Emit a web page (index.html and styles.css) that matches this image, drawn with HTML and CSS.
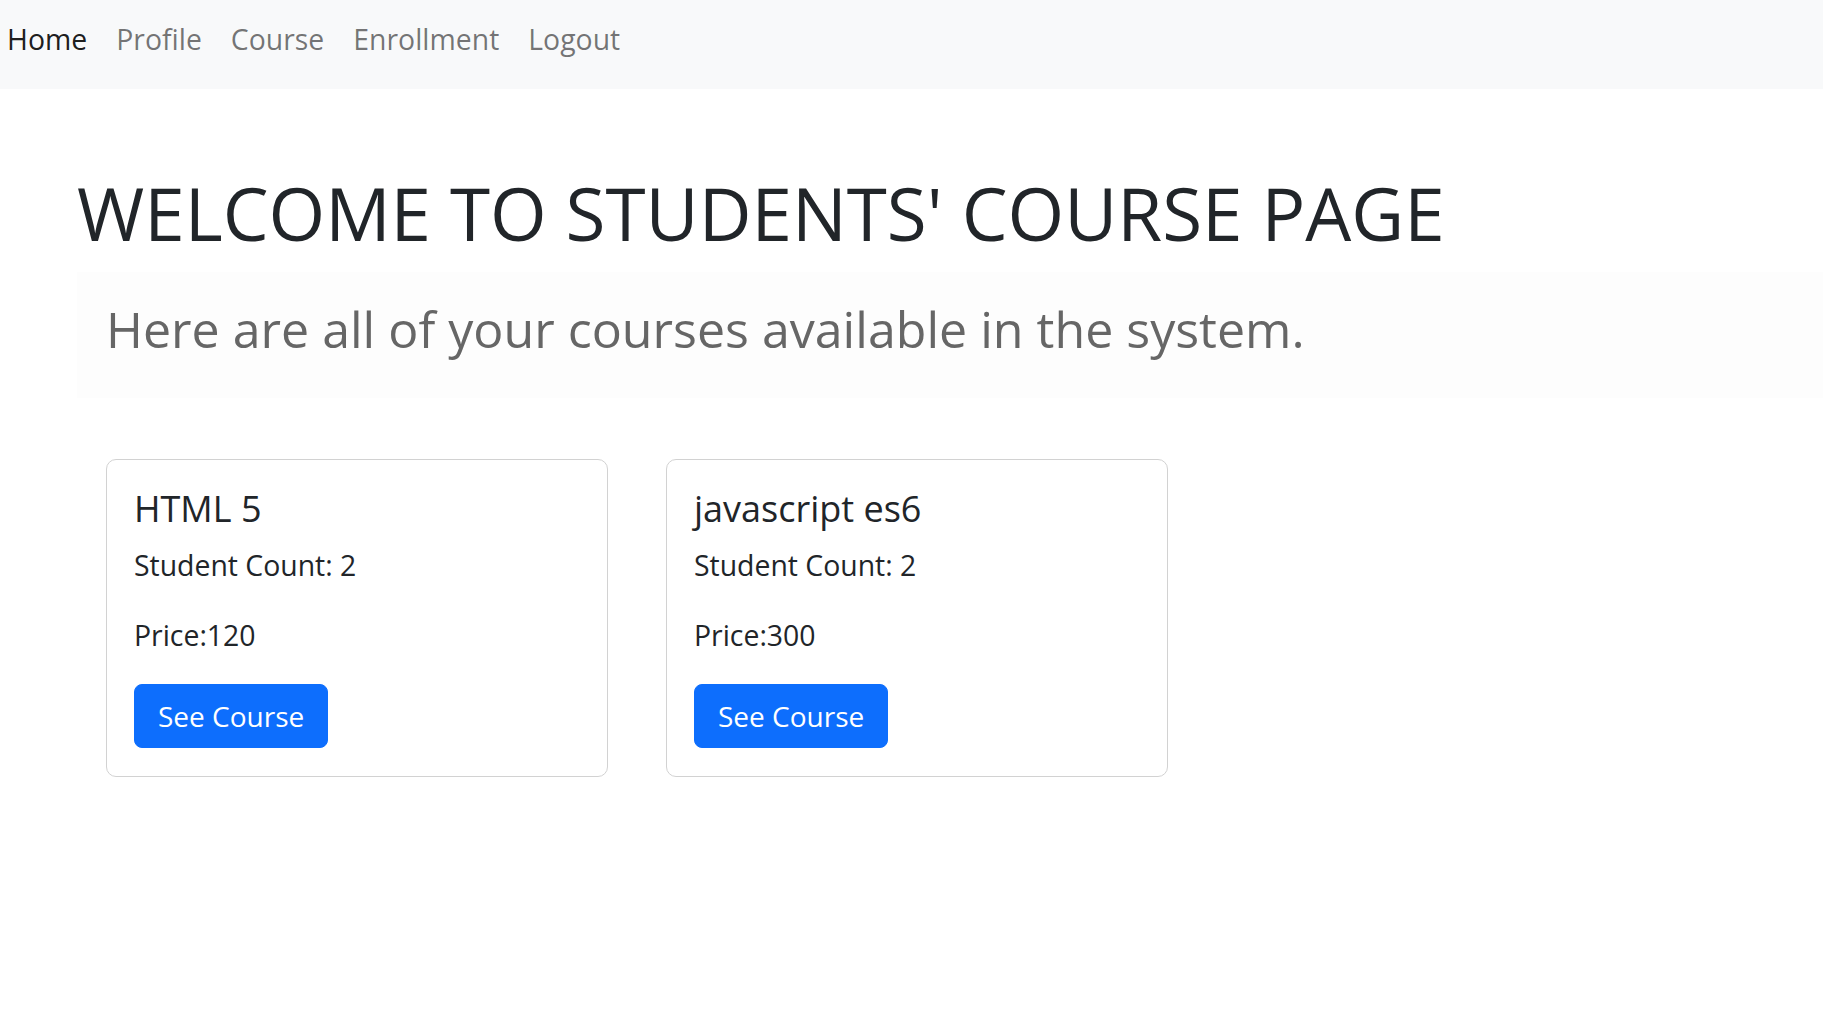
FILE: index.html
```html
<!DOCTYPE html>
<html lang="en">
<head>
<meta charset="utf-8">
<title>Students' Course Page</title>
<link rel="stylesheet" href="styles.css">
</head>
<body>
<nav class="navbar">
  <a class="nav-link active" href="#">Home</a>
  <a class="nav-link" href="#">Profile</a>
  <a class="nav-link" href="#">Course</a>
  <a class="nav-link" href="#">Enrollment</a>
  <a class="nav-link" href="#">Logout</a>
</nav>
<main class="main">
  <h1 class="title">WELCOME TO STUDENTS' COURSE PAGE</h1>
  <div class="lead-box">
    <p class="lead">Here are all of your courses available in the system.</p>
  </div>
  <div class="cards">
    <div class="card">
      <h5 class="card-title">HTML 5</h5>
      <p class="card-text">Student Count: 2</p>
      <p class="card-text">Price:120</p>
      <a class="btn" href="#">See Course</a>
    </div>
    <div class="card">
      <h5 class="card-title">javascript es6</h5>
      <p class="card-text">Student Count: 2</p>
      <p class="card-text">Price:300</p>
      <a class="btn" href="#">See Course</a>
    </div>
  </div>
</main>
</body>
</html>
```

FILE: styles.css
```css
* { box-sizing: border-box; }
html, body {
  margin: 0;
  padding: 0;
  background: #ffffff;
}
body {
  font-family: "Open Sans", "Noto Sans", "Liberation Sans", sans-serif;
  color: #212529;
}
.navbar {
  height: 89px;
  background: #f8f9fa;
  display: flex;
  align-items: center;
  gap: 29px;
  padding: 0 0 11px 7px;
}
.nav-link {
  font-size: 28.4px;
  line-height: 42px;
  color: rgba(0, 0, 0, 0.55);
  text-decoration: none;
}
.nav-link.active {
  color: rgba(0, 0, 0, 0.9);
}
.main {
  padding-left: 77px;
}
.title {
  margin: 80px 0 16px 0;
  font-size: 72.8px;
  font-weight: 400;
  line-height: 1.2;
  color: #212529;
}
.lead-box {
  height: 126px;
  background: #fdfdfd;
  padding: 27px 0 0 29px;
}
.lead {
  margin: 0;
  font-size: 50.1px;
  line-height: 1.2;
  color: #666666;
  font-weight: 400;
}
.cards {
  display: flex;
  gap: 58px;
  margin: 61px 0 0 29px;
}
.card {
  width: 502px;
  border: 1px solid #d2d2d2;
  border-radius: 10px;
  padding: 27px 29px 28px 27px;
  background: #fff;
}
.card-title {
  margin: 0 0 13px 0;
  font-size: 36px;
  font-weight: 400;
  line-height: 1.2;
}
.card-text {
  margin: 0 0 28px 0;
  font-size: 28.4px;
  line-height: 42px;
}
.btn {
  display: inline-block;
  background: #0d6efd;
  color: #ffffff;
  border: 1px solid #0d6efd;
  border-radius: 8px;
  padding: 10px 23px;
  font-size: 28px;
  line-height: 42px;
  text-decoration: none;
}
```
